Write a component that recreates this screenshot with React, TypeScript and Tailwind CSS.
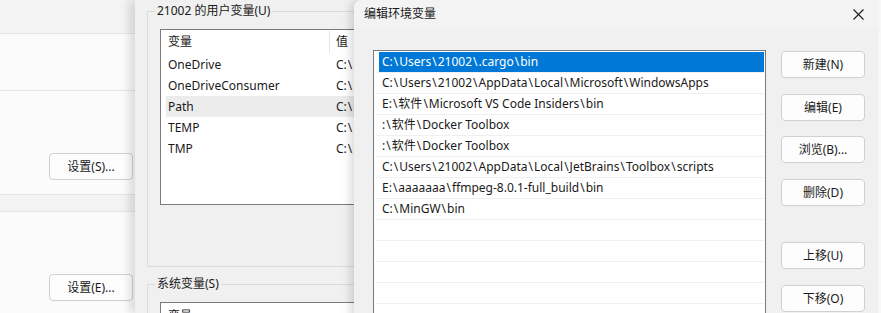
import React from "react";

const FONT = "font-['Segoe_UI','Noto_Sans','Noto_Sans_CJK_SC',sans-serif]";

const userVars = ["OneDrive", "OneDriveConsumer", "Path", "TEMP", "TMP"];

const pathEntries = [
  "C:\\Users\\21002\\.cargo\\bin",
  "C:\\Users\\21002\\AppData\\Local\\Microsoft\\WindowsApps",
  "E:\\软件\\Microsoft VS Code Insiders\\bin",
  ":\\软件\\Docker Toolbox",
  ":\\软件\\Docker Toolbox",
  "C:\\Users\\21002\\AppData\\Local\\JetBrains\\Toolbox\\scripts",
  "E:\\aaaaaaa\\ffmpeg-8.0.1-full_build\\bin",
  "C:\\MinGW\\bin",
  "",
  "",
  "",
  "",
  "",
];

// Segoe UI draws the backslash wider than the fallback font does
function PathText({ text }: { text: string }) {
  const parts = text.split("\\");
  return (
    <>
      {parts.map((p, i) => (
        <React.Fragment key={i}>
          {i > 0 && <span className="px-px">\</span>}
          {p}
        </React.Fragment>
      ))}
    </>
  );
}

function WinButton({ label, className = "" }: { label: string; className?: string }) {
  return (
    <div
      className={`flex h-[27px] w-[84px] items-center justify-center rounded-[4px] border border-[#d0d0d0] bg-[#fdfdfd] text-[12px] text-[#1a1a1a] ${className}`}
    >
      {label}
    </div>
  );
}

function SettingsWindow() {
  // back window, only its right strip is visible
  return (
    <div className="absolute left-0 top-0 h-[313px] w-[135px] bg-[#f3f3f3]">
      <div className="h-[34px] border-b border-[#e5e5e5] bg-[#f3f3f3]" />
      <div className="h-[57px] border-b border-[#e5e5e5] bg-[#fbfbfb]" />
      <div className="flex h-[103px] items-end bg-[#fbfbfb] pb-[14px] pl-[49px]">
        <WinButton label="设置(S)..." className="w-[83px]" />
      </div>
      <div className="h-[18px] border-y border-[#e5e5e5] bg-[#f3f3f3]" />
      <div className="flex h-[101px] items-end bg-[#fbfbfb] pb-[12px] pl-[49px]">
        <WinButton label="设置(E)..." className="w-[83px]" />
      </div>
    </div>
  );
}

function EnvVarsWindow() {
  return (
    <div className="absolute left-[135px] top-0 h-[313px] w-[400px] bg-[#f0f0f0] shadow-[-6px_0_8px_rgba(0,0,0,0.12)]">
      {/* user vars group */}
      <div className="relative ml-[12px] mt-[11px] h-[256px] border border-[#dcdcdc]">
        <span className="absolute left-[7px] top-[-8px] bg-[#f0f0f0] px-[2px] text-[12px] leading-[14px] text-[#1a1a1a]">
          21002 的用户变量(U)
        </span>
        <div className="ml-[12px] mt-[17px] h-[176px] border border-[#7a7a7a] bg-white pl-[5px] text-[12px] text-[#1a1a1a]">
          <div className="flex h-[24px] items-center">
            <span className="w-[163px] pl-[2px]">变量</span>
            <span className="h-[22px] w-px bg-[#e5e5e5]" />
            <span className="pl-[6px]">值</span>
          </div>
          {userVars.map((v) => (
            <div
              key={v}
              className={`flex h-[21px] items-center ${v === "Path" ? "bg-[#ececec]" : ""}`}
            >
              <span className="w-[170px] pl-[2px]">{v}</span>
              <span>
                <PathText text="C:\Users" />
              </span>
            </div>
          ))}
        </div>
      </div>
      {/* system vars group */}
      <div className="relative ml-[12px] mt-[17px] h-[60px] border border-[#dcdcdc]">
        <span className="absolute left-[7px] top-[-8px] bg-[#f0f0f0] px-[2px] text-[12px] leading-[14px] text-[#1a1a1a]">
          系统变量(S)
        </span>
        <div className="ml-[12px] mt-[17px] h-[40px] border border-[#7a7a7a] bg-white pl-[7px] pt-[3px] text-[12px] leading-[20px] text-[#1a1a1a]">
          变量
        </div>
      </div>
    </div>
  );
}

function EditDialog() {
  return (
    <div className="absolute left-[354px] top-0 h-[330px] w-[524px] overflow-hidden rounded-tl-[8px] bg-[#f0f0f0] shadow-[-4px_0_8px_rgba(0,0,0,0.14)]">
      <div className="flex h-[28px] items-center justify-between bg-[#f3f3f3] pl-[10px] pr-[14px] text-[12px] text-[#1a1a1a]">
        <span>编辑环境变量</span>
        <svg width="11" height="11" viewBox="0 0 11 11" className="mt-[1px]">
          <path d="M0.5 0.5 L10.5 10.5 M10.5 0.5 L0.5 10.5" stroke="#1a1a1a" strokeWidth="1.1" />
        </svg>
      </div>
      <div className="flex pl-[19px] pt-[22px]">
        <div className="h-[300px] w-[393px] border border-[#7a7a7a] bg-white px-px pt-px text-[12px] text-[#1a1a1a]">
          {pathEntries.map((p, i) => (
            <div key={i} className="h-[21px] border-b border-[#f0f0f0]">
              <div
                className={`ml-[4px] flex h-[20px] items-center whitespace-pre pl-[3px] ${
                  i === 0 ? "bg-[#0078d7] text-white" : ""
                }`}
              >
                <PathText text={p} />
              </div>
            </div>
          ))}
        </div>
        <div className="ml-[15px] flex flex-col">
          <WinButton label="新建(N)" className="mt-[1px]" />
          <WinButton label="编辑(E)" className="mt-[16px]" />
          <WinButton label="浏览(B)..." className="mt-[15px]" />
          <WinButton label="删除(D)" className="mt-[16px]" />
          <WinButton label="上移(U)" className="mt-[36px]" />
          <WinButton label="下移(O)" className="mt-[16px]" />
        </div>
      </div>
    </div>
  );
}

export default function App() {
  return (
    <div className={`relative h-[313px] w-[881px] overflow-hidden bg-[#fafafa] ${FONT}`}>
      <SettingsWindow />
      <EnvVarsWindow />
      <EditDialog />
    </div>
  );
}
